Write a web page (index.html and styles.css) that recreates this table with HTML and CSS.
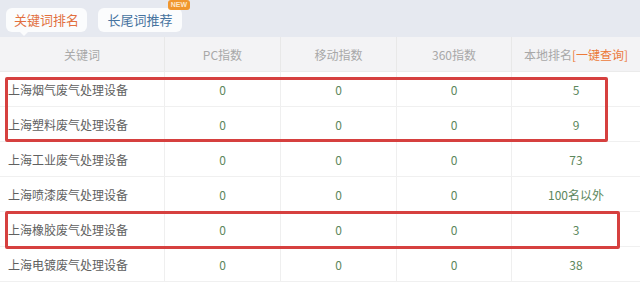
FILE: index.html
```html
<!DOCTYPE html>
<html lang="zh">
<head>
<meta charset="utf-8">
<link rel="stylesheet" href="styles.css">
</head>
<body>
<div class="page">
  <div class="tabs">
    <div class="tab active">关键词排名</div>
    <div class="tab blue">长尾词推荐<span class="badge">NEW</span></div>
  </div>
  <div class="table">
    <div class="row head">
      <div class="cell">关键词</div>
      <div class="cell">PC指数</div>
      <div class="cell">移动指数</div>
      <div class="cell">360指数</div>
      <div class="cell">本地排名<span class="link">[一键查询]</span></div>
    </div>
    <div class="row">
      <div class="cell kw">上海烟气废气处理设备</div>
      <div class="cell">0</div><div class="cell">0</div><div class="cell">0</div><div class="cell">5</div>
    </div>
    <div class="row">
      <div class="cell kw">上海塑料废气处理设备</div>
      <div class="cell">0</div><div class="cell">0</div><div class="cell">0</div><div class="cell">9</div>
    </div>
    <div class="row">
      <div class="cell kw">上海工业废气处理设备</div>
      <div class="cell">0</div><div class="cell">0</div><div class="cell">0</div><div class="cell">73</div>
    </div>
    <div class="row">
      <div class="cell kw">上海喷漆废气处理设备</div>
      <div class="cell">0</div><div class="cell">0</div><div class="cell">0</div><div class="cell">100名以外</div>
    </div>
    <div class="row">
      <div class="cell kw">上海橡胶废气处理设备</div>
      <div class="cell">0</div><div class="cell">0</div><div class="cell">0</div><div class="cell">3</div>
    </div>
    <div class="row">
      <div class="cell kw">上海电镀废气处理设备</div>
      <div class="cell">0</div><div class="cell">0</div><div class="cell">0</div><div class="cell">38</div>
    </div>
    <div class="mark mark-a"></div>
    <div class="mark mark-b"></div>
  </div>
</div>
</body>
</html>
```
FILE: styles.css
```css
* { box-sizing: border-box; }
html, body { margin: 0; padding: 0; }
body {
  width: 640px;
  height: 288px;
  overflow: hidden;
  background: #ffffff;
  font-family: "Noto Sans CJK SC", "Liberation Sans", sans-serif;
  font-size: 12px;
}
.page { width: 640px; }
.tabs {
  height: 37px;
  background: #e6e9f0;
  display: flex;
  align-items: flex-start;
  gap: 11px;
  padding: 8px 0 0 6px;
}
.tab {
  position: relative;
  height: 24px;
  line-height: 24px;
  background: #fbfcfd;
  border-radius: 6px;
  font-size: 13px;
  text-align: center;
}
.tab.active { color: #e2703f; width: 81px; }
.tab.blue { width: 84px; color: #46739f; }
.tab.active::after {
  content: "";
  position: absolute;
  left: 14px;
  bottom: -4px;
  border-left: 4px solid transparent;
  border-right: 4px solid transparent;
  border-top: 4px solid #fbfcfd;
}
.badge {
  position: absolute;
  right: -8px;
  top: -8px;
  height: 10px;
  line-height: 10px;
  padding: 0 3px;
  font-family: "Liberation Sans", sans-serif;
  font-size: 7px;
  font-weight: bold;
  color: #fde6c8;
  background: #f0962e;
  border-radius: 3px;
}
.table { position: relative; }
.row {
  display: grid;
  grid-template-columns: 165px 116px 116px 115px 128px;
  height: 35px;
  border-bottom: 1px solid #f0f0f0;
}
.row.head {
  background: #f3f3f5;
  border-bottom: 1px solid #ebebeb;
}
.cell {
  display: flex;
  align-items: center;
  justify-content: center;
  color: #5c875c;
  border-right: 1px solid #efefef;
  white-space: nowrap;
}
.cell:last-child { border-right: none; }
.head .cell { color: #a8a8a8; border-right-color: #e8e8e8; }
.cell.kw { justify-content: flex-start; padding-left: 8px; color: #606060; }
.link { color: #ec7a3a; }
.mark {
  position: absolute;
  border: 3px solid #d6403f;
  border-radius: 2px;
}
.mark-a { left: 5px; top: 40px; width: 603px; height: 65px; }
.mark-b { left: 5px; top: 174px; width: 615px; height: 38px; }
```
